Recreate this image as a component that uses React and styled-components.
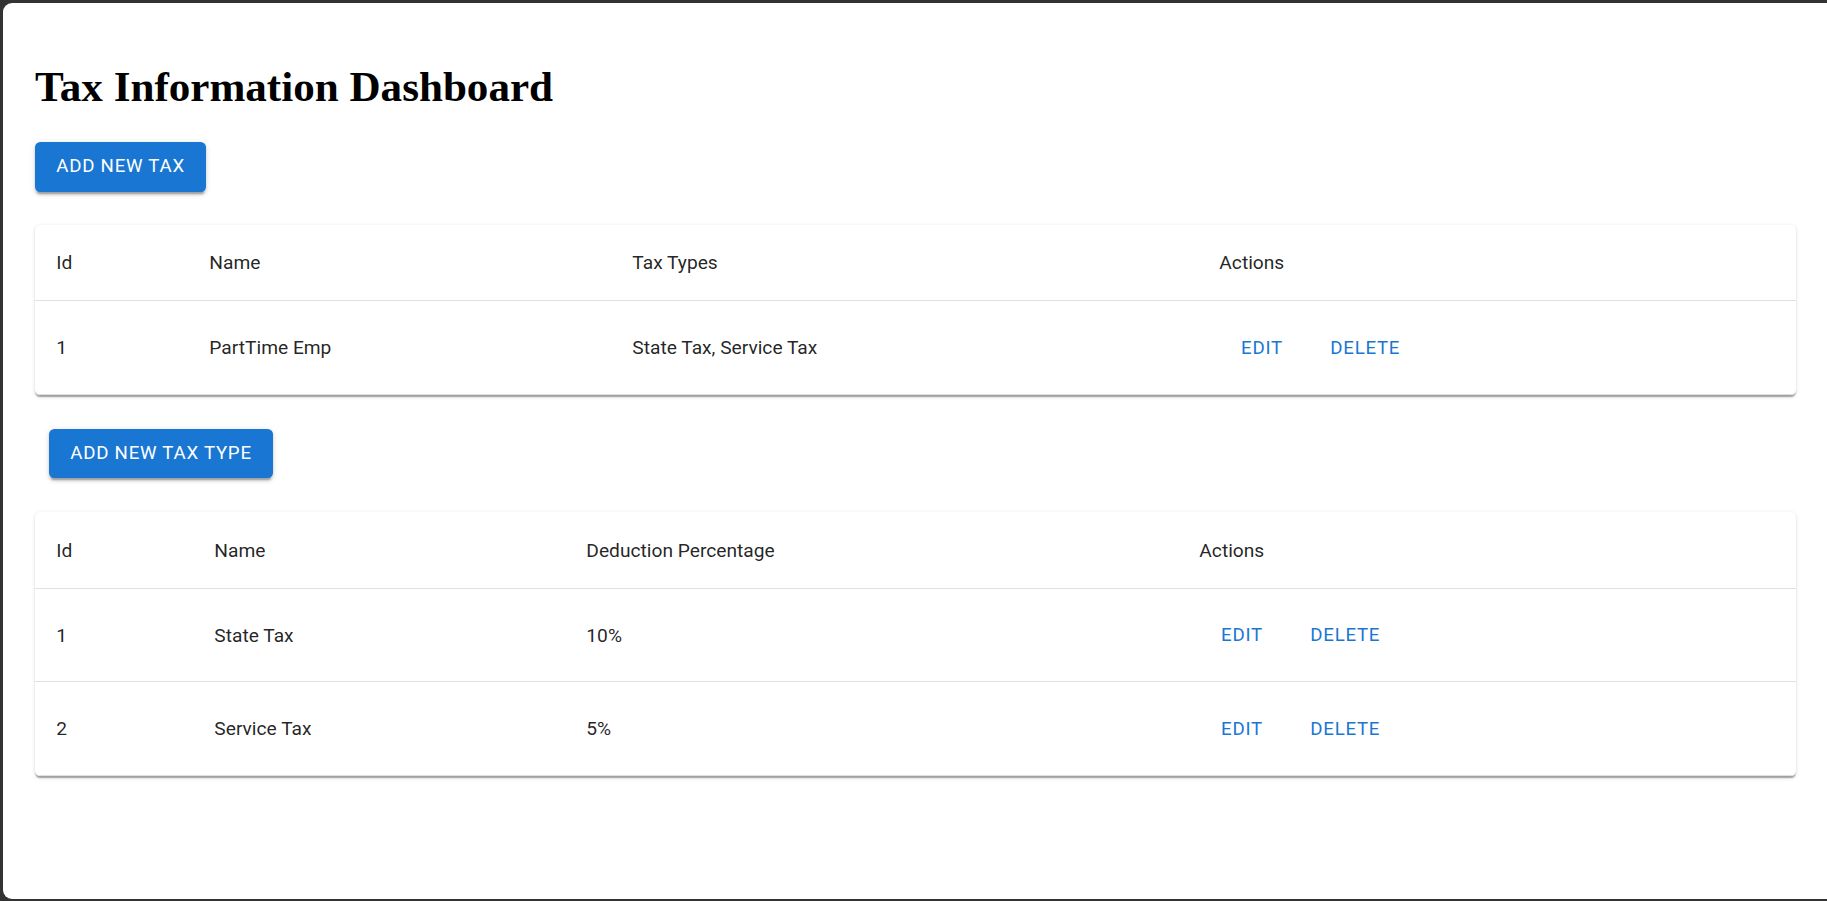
import React from "react";
import styled, { createGlobalStyle } from "styled-components";

const GlobalStyle = createGlobalStyle`
  html,
  body {
    margin: 0;
    padding: 0;
    background: #333333;
  }
  body {
    font-family: Roboto, "Liberation Sans", sans-serif;
    overflow: hidden;
  }
`;

const Frame = styled.div`
  width: 1824px;
  height: 896px;
  margin: 3px 0 0 3px;
  box-sizing: border-box;
  padding: 60px 31px 0 32px;
  background: #fff;
  border-radius: 9px 0 0 9px;
  display: flex;
  flex-direction: column;
  align-items: flex-start;
`;

const Title = styled.h1`
  margin: 0 0 31px;
  font-family: "Liberation Serif", "Times New Roman", serif;
  font-size: 43.1px;
  font-weight: 700;
  line-height: 48px;
  color: #000;
`;

const ContainedButton = styled.button`
  margin: 0 0 ${(p) => p.$gap || 33}px ${(p) => p.$indent || 0}px;
  padding: 8px 21.33px;
  border: 0;
  border-radius: 5.33px;
  background: #1976d2;
  color: #fff;
  font-family: Roboto, "Liberation Sans", sans-serif;
  font-size: 18.67px;
  font-weight: 400;
  line-height: 33.67px;
  letter-spacing: 0.75px;
  text-transform: uppercase;
  box-shadow: 0 4px 1.33px -2.67px rgba(0, 0, 0, 0.2),
    0 2.67px 2.67px 0 rgba(0, 0, 0, 0.14),
    0 1.33px 6.67px 0 rgba(0, 0, 0, 0.12);
  cursor: pointer;
`;

const Card = styled.div`
  align-self: stretch;
  margin-bottom: 34px;
  background: #fff;
  border-radius: 5.33px;
  overflow: hidden;
  box-shadow: 0 2.67px 1.33px -1.33px rgba(0, 0, 0, 0.2),
    0 1.33px 1.33px 0 rgba(0, 0, 0, 0.14),
    0 1.33px 4px 0 rgba(0, 0, 0, 0.12);
`;

const Table = styled.table`
  width: 100%;
  border-collapse: collapse;
  table-layout: fixed;
`;

const HeadCell = styled.th`
  padding: 22.33px 21.33px 21.33px;
  border-bottom: 1px solid #e0e0e0;
  text-align: left;
  vertical-align: middle;
  font-size: 19.2px;
  font-weight: 400;
  line-height: 32px;
  color: rgba(0, 0, 0, 0.87);
`;

const Cell = styled.td`
  padding: 22.33px 21.33px 20.33px;
  border-bottom: 1px solid #e0e0e0;
  text-align: left;
  vertical-align: middle;
  font-size: 19.2px;
  font-weight: 400;
  line-height: 26.67px;
  color: rgba(0, 0, 0, 0.87);
`;

const Actions = styled.div`
  display: flex;
  gap: 15px;
`;

const TextButton = styled.button`
  min-width: 85.33px;
  padding: 8px 10.67px;
  border: 0;
  border-radius: 5.33px;
  background: transparent;
  color: #1976d2;
  font-family: Roboto, "Liberation Sans", sans-serif;
  font-size: 18.67px;
  font-weight: 400;
  line-height: 33.67px;
  letter-spacing: 0.75px;
  text-transform: uppercase;
  cursor: pointer;
`;

const taxes = [{ id: 1, name: "PartTime Emp", types: "State Tax, Service Tax" }];

const taxTypes = [
  { id: 1, name: "State Tax", pct: "10%" },
  { id: 2, name: "Service Tax", pct: "5%" },
];

const DataTable = ({ cols, heads, rows }) => (
  <Card>
    <Table>
      <colgroup>
        {cols.map((w, i) => (
          <col key={i} style={{ width: w + "px" }} />
        ))}
      </colgroup>
      <thead>
        <tr>
          {heads.map((h) => (
            <HeadCell key={h}>{h}</HeadCell>
          ))}
        </tr>
      </thead>
      <tbody>
        {rows.map((r, i) => (
          <tr key={i}>
            {r.map((v, j) => (
              <Cell key={j}>{v}</Cell>
            ))}
            <Cell>
              <Actions>
                <TextButton>Edit</TextButton>
                <TextButton>Delete</TextButton>
              </Actions>
            </Cell>
          </tr>
        ))}
      </tbody>
    </Table>
  </Card>
);

const App = () => {
  return (
    <>
      <GlobalStyle />
      <Frame>
        <Title>Tax Information Dashboard</Title>
        <ContainedButton>Add New Tax</ContainedButton>
        <DataTable
          cols={[153, 423, 587, 598]}
          heads={["Id", "Name", "Tax Types", "Actions"]}
          rows={taxes.map((t) => [t.id, t.name, t.types])}
        />
        <ContainedButton $indent={14} $gap={34}>
          Add New Tax Type
        </ContainedButton>
        <DataTable
          cols={[158, 372, 613, 618]}
          heads={["Id", "Name", "Deduction Percentage", "Actions"]}
          rows={taxTypes.map((t) => [t.id, t.name, t.pct])}
        />
      </Frame>
    </>
  );
};

export default App;
